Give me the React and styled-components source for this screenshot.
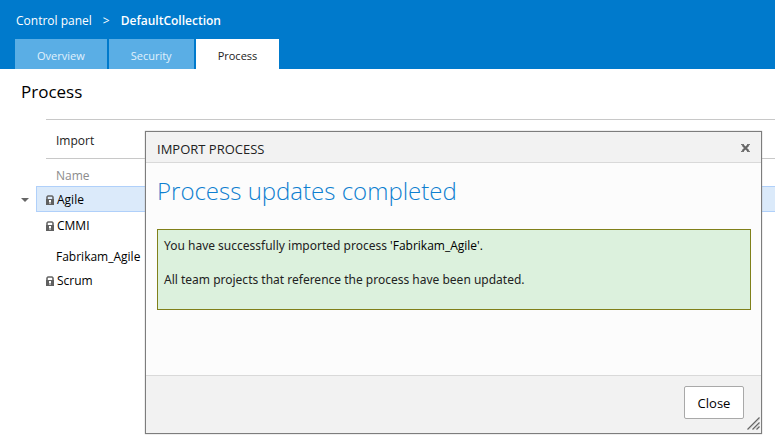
import React from "react";
import styled, { createGlobalStyle } from "styled-components";

const GlobalStyle = createGlobalStyle`
  *, *::before, *::after { box-sizing: border-box; }
  body {
    margin: 0;
    background: #fff;
    color: #000;
    font-family: "Open Sans", "Segoe UI", sans-serif;
    font-size: 12px;
    line-height: 16px;
  }
  h1, h2, p { margin: 0; font-weight: 400; }
  button { font-family: inherit; cursor: pointer; }
`;

const Page = styled.div`
  position: relative;
  min-height: 100vh;
`;

const Header = styled.header`
  display: flex;
  flex-direction: column;
  gap: 10px;
  padding: 13px 15px 0;
  background: #007acc;
`;

const Breadcrumb = styled.nav`
  display: flex;
  gap: 11px;
  padding-left: 1px;
  color: #fff;
`;

const Crumb = styled.a`
  color: inherit;
  text-decoration: none;
  font-weight: ${({ $current }) => ($current ? 600 : 400)};
`;

const Tabs = styled.nav`
  display: flex;
  gap: 2px;
`;

const Tab = styled.a`
  height: 30px;
  padding: 0 22px;
  font-size: 11px;
  line-height: 33px;
  text-decoration: none;
  background: ${({ $active }) => ($active ? "#fff" : "#5aaee5")};
  color: ${({ $active }) => ($active ? "#222" : "#e0f1fc")};
`;

const PageTitle = styled.h1`
  padding: 11px 21px 0;
  font-size: 17px;
  line-height: 24px;
`;

const Toolbar = styled.div`
  display: flex;
  height: 40px;
  margin: 15px 0 0 46px;
  padding-left: 10px;
  border-top: 1px solid #c8c8c8;
  border-bottom: 1px solid #c8c8c8;
`;

const ToolbarButton = styled.button`
  padding: 2px 0 0;
  border: 0;
  background: none;
  font-size: 12px;
  color: #222;
`;

const ProcessTable = styled.table`
  width: 100%;
  border-collapse: collapse;
  table-layout: fixed;
`;

const CaretColumn = styled.col`
  width: 36px;
`;

const NameHeader = styled.th`
  height: 27px;
  padding: 6px 0 0 20px;
  text-align: left;
  font-weight: 400;
  color: #8c8c8c;
`;

const CaretCell = styled.td`
  padding: 0 7px 3px 0;
  text-align: right;
`;

const NameCell = styled.td`
  height: ${({ $tall }) => ($tall ? 29 : 26)}px;
  padding: ${({ $tall }) => ($tall ? "8px 0 0 20px" : "2px 0 0 10px")};
  background: ${({ $selected }) => ($selected ? "#dbeafa" : "transparent")};
  box-shadow: ${({ $selected }) =>
    $selected ? "inset 1px 1px #b0d0fa, inset 0 -1px #b0d0fa" : "none"};
`;

const NameContent = styled.div`
  display: flex;
  align-items: center;
  gap: 3px;
`;

const CaretButton = styled.button`
  display: inline-flex;
  padding: 0;
  border: 0;
  background: none;
`;

const Dialog = styled.section`
  position: absolute;
  top: 131px;
  left: 145px;
  right: 13px;
  display: flex;
  flex-direction: column;
  border: 1px solid #7d7d7d;
  background: #fcfcfc;
  box-shadow: 0 0 1px #999;
`;

const DialogBar = styled.header`
  display: flex;
  align-items: center;
  justify-content: space-between;
  height: 31px;
  padding: 3px 11px 0;
  background: #f2f2f2;
  border-bottom: 1px solid #d9d9d9;
`;

const DialogCaption = styled.h2`
  font-size: 13px;
  color: #222;
`;

const DismissButton = styled.button`
  display: flex;
  padding: 0 0 2px;
  border: 0;
  background: none;
`;

const DialogBody = styled.div`
  flex: 1;
  padding: 11px 10px 65px 11px;
`;

const Heading = styled.h2`
  color: #0e7fd0;
  font-size: 24px;
  font-weight: 300;
  line-height: 34px;
`;

const Message = styled.div`
  display: flex;
  flex-direction: column;
  gap: 18px;
  margin-top: 21px;
  padding: 8px 6px 21px;
  border: 1px solid #80801a;
  background: #dcf1dd;
  color: #222;
  font-family: "Noto Sans", "Segoe UI", sans-serif;
`;

const ProcessName = styled.span`
  color: #000;
  font-family: "Open Sans", "Segoe UI", sans-serif;
`;

const DialogFooter = styled.footer`
  position: relative;
  display: flex;
  justify-content: flex-end;
  padding: 10px 17px 14px;
  border-top: 1px solid #d9d9d9;
  background: #f2f2f2;
`;

const CloseButton = styled.button`
  width: 60px;
  height: 33px;
  padding: 0;
  border: 1px solid #a9a9a9;
  border-radius: 2px;
  background: #fff;
  color: #000;
  font-size: 13px;
`;

const ResizeGrip = styled.svg`
  position: absolute;
  right: 1px;
  bottom: 3px;
`;

function LockIcon() {
  return (
    <svg width="8" height="10" viewBox="0 0 8 10" aria-hidden="true">
      <path d="M1 4V2L2 1H6L7 2V4" fill="none" stroke="#666" strokeWidth="1.6" />
      <path d="M0 4H8V10H0Z" fill="#606060" />
      <path d="M3 5H5V7H4.5V9H3.5V7H3Z" fill="#fff" />
    </svg>
  );
}

const processes = [
  { name: "Agile", locked: true, selected: true },
  { name: "CMMI", locked: true },
  { name: "Fabrikam_Agile" },
  { name: "Scrum", locked: true },
];

const tabs = ["Overview", "Security", "Process"];

export default function App() {
  return (
    <Page>
      <GlobalStyle />
      <Header>
        <Breadcrumb aria-label="Breadcrumb">
          <Crumb href="#control-panel">Control panel</Crumb>
          <span>&gt;</span>
          <Crumb href="#collection" $current>DefaultCollection</Crumb>
        </Breadcrumb>
        <Tabs>
          {tabs.map((tab) => (
            <Tab key={tab} href={`#${tab.toLowerCase()}`} $active={tab === "Process"}>
              {tab}
            </Tab>
          ))}
        </Tabs>
      </Header>
      <main>
        <PageTitle>Process</PageTitle>
        <Toolbar>
          <ToolbarButton type="button">Import</ToolbarButton>
        </Toolbar>
        <ProcessTable>
          <colgroup>
            <CaretColumn />
            <col />
          </colgroup>
          <thead>
            <tr>
              <td />
              <NameHeader scope="col">Name</NameHeader>
            </tr>
          </thead>
          <tbody>
            {processes.map(({ name, locked, selected }) => (
              <tr key={name}>
                <CaretCell>
                  {selected && (
                    <CaretButton type="button" aria-label={`Actions for ${name}`}>
                      <svg width="8" height="4" viewBox="0 0 8 4" aria-hidden="true">
                        <path d="M0 0H8L4 4Z" fill="#666" />
                      </svg>
                    </CaretButton>
                  )}
                </CaretCell>
                <NameCell $tall={!locked} $selected={selected}>
                  <NameContent>
                    {locked && <LockIcon />}
                    <span>{name}</span>
                  </NameContent>
                </NameCell>
              </tr>
            ))}
          </tbody>
        </ProcessTable>
      </main>
      <Dialog role="dialog" aria-labelledby="dialog-caption">
        <DialogBar>
          <DialogCaption id="dialog-caption">IMPORT PROCESS</DialogCaption>
          <DismissButton type="button" aria-label="Dismiss">
            <svg width="9" height="8" viewBox="0 0 9 8" aria-hidden="true">
              <path d="M1.5 1L7.5 7M7.5 1L1.5 7" stroke="#666" strokeWidth="2.2" />
              <path d="M0 .5H3M6 .5H9M0 7.5H3M6 7.5H9" stroke="#777" />
            </svg>
          </DismissButton>
        </DialogBar>
        <DialogBody>
          <Heading>Process updates completed</Heading>
          <Message role="status">
            <p>
              You have successfully imported process <ProcessName>'Fabrikam_Agile'.</ProcessName>
            </p>
            <p>All team projects that reference the process have been updated.</p>
          </Message>
        </DialogBody>
        <DialogFooter>
          <CloseButton type="button">Close</CloseButton>
          <ResizeGrip width="13" height="13" viewBox="0 0 13 13" aria-hidden="true">
            <path d="M0.5 12.5L12.5 0.5M5.5 12.5L12.5 5.5M9.5 12.5L12.5 9.5" stroke="#666" strokeWidth="1.3" />
            <path d="M2 12.5L12.5 2M7 12.5L12.5 7" stroke="#bbb" strokeWidth=".7" />
          </ResizeGrip>
        </DialogFooter>
      </Dialog>
    </Page>
  );
}
